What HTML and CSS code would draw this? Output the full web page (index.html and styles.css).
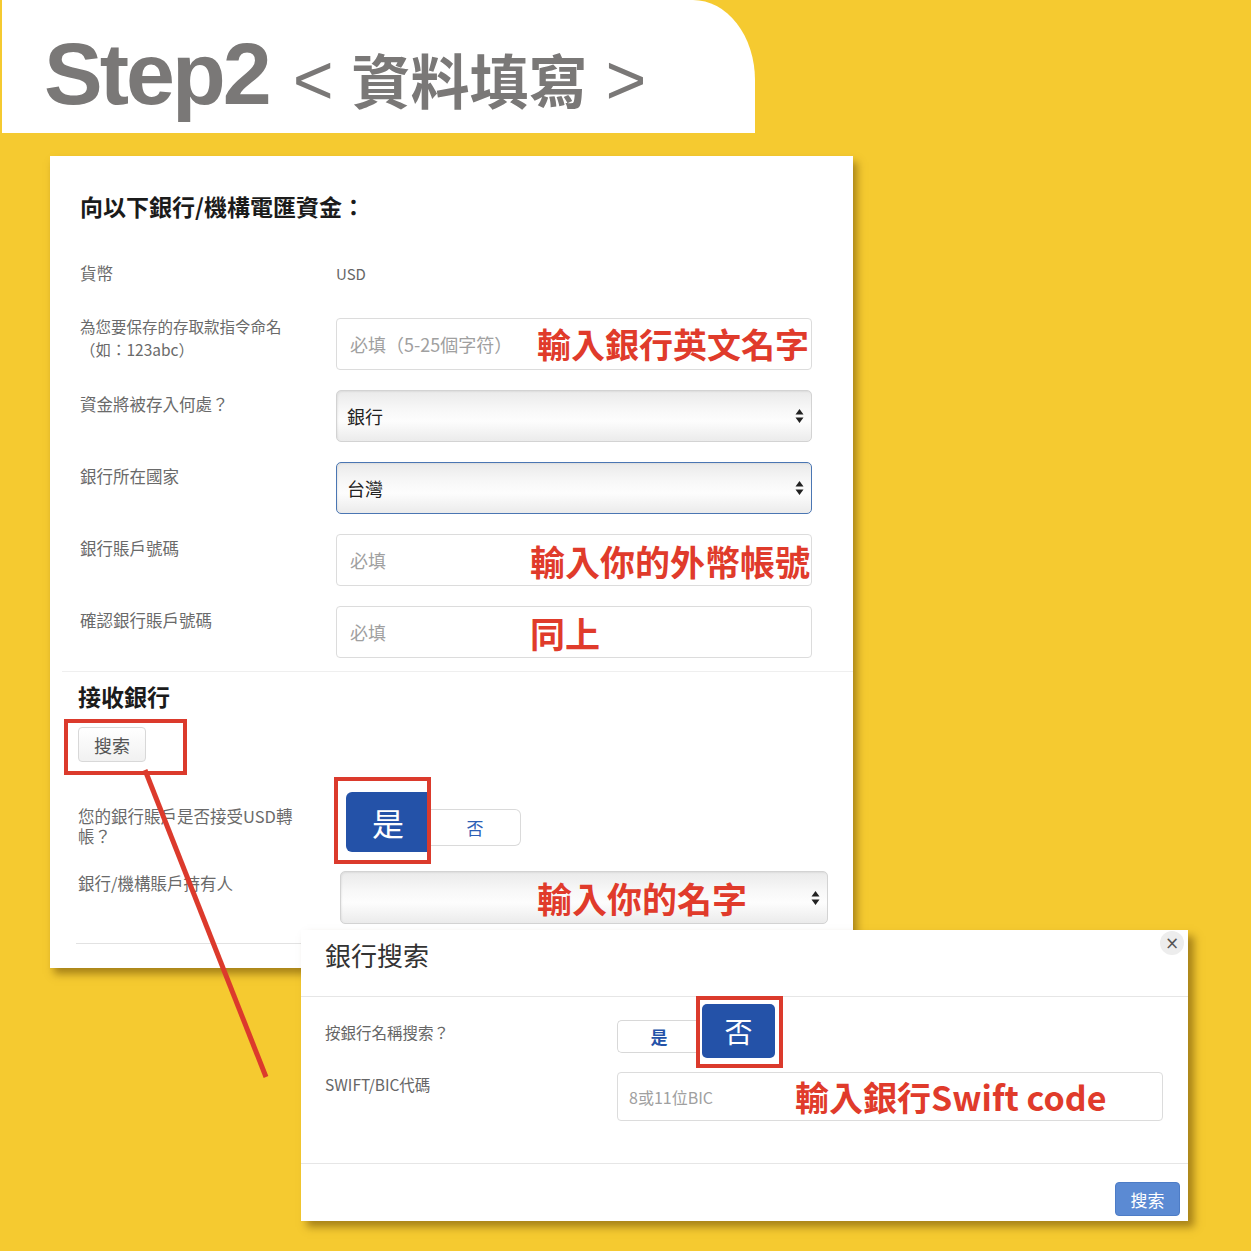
FILE: index.html
```html
<!DOCTYPE html>
<html lang="zh-Hant">
<head>
<meta charset="utf-8">
<title>Step2 資料填寫</title>
<link rel="stylesheet" href="styles.css">
</head>
<body>
<div class="page">
  <header class="banner">
    <span class="step-num">Step2</span>
    <span class="step-sub"><span class="bracket">&lt;</span><span class="step-cjk">資料填寫</span><span class="bracket">&gt;</span></span>
  </header>

  <section class="card">
    <h2 class="card-title">向以下銀行/機構電匯資金：</h2>
    <div class="rows">
      <div class="row row-currency">
        <div class="label">貨幣</div>
        <div class="value">USD</div>
      </div>
      <div class="row">
        <div class="label label-two">為您要保存的存取款指令命名<br>（如：123abc）</div>
        <div class="field input"><span class="ph">必填（5-25個字符）</span><span class="note note-a">輸入銀行英文名字</span></div>
      </div>
      <div class="row">
        <div class="label">資金將被存入何處？</div>
        <div class="field select"><span class="val">銀行</span><svg class="arrows" viewBox="0 0 9 16"><path d="M4.5 1 L8.5 6.5 H0.5Z M4.5 15 L8.5 9.5 H0.5Z" fill="#222"/></svg></div>
      </div>
      <div class="row">
        <div class="label">銀行所在國家</div>
        <div class="field select focus"><span class="val">台灣</span><svg class="arrows" viewBox="0 0 9 16"><path d="M4.5 1 L8.5 6.5 H0.5Z M4.5 15 L8.5 9.5 H0.5Z" fill="#222"/></svg></div>
      </div>
      <div class="row">
        <div class="label">銀行賬戶號碼</div>
        <div class="field input"><span class="ph">必填</span><span class="note note-b">輸入你的外幣帳號</span></div>
      </div>
      <div class="row">
        <div class="label">確認銀行賬戶號碼</div>
        <div class="field input"><span class="ph">必填</span><span class="note note-b">同上</span></div>
      </div>
    </div>
    <hr class="sep">
    <div class="section2">
      <h3 class="sub-title">接收銀行</h3>
      <button class="btn-search">搜索</button>
      <div class="row2 row-yn">
        <div class="label2">您的銀行賬戶是否接受USD轉帳？</div>
        <div class="yn"><span class="yes">是</span><span class="no">否</span></div>
      </div>
      <div class="row2 row-owner">
        <div class="label2">銀行/機構賬戶持有人</div>
        <div class="field select wide"><span class="note note-c">輸入你的名字</span><svg class="arrows" viewBox="0 0 9 16"><path d="M4.5 1 L8.5 6.5 H0.5Z M4.5 15 L8.5 9.5 H0.5Z" fill="#222"/></svg></div>
      </div>
      <hr class="sep2">
    </div>
  </section>

  <div class="dialog">
    <div class="dlg-head">銀行搜索<span class="close">×</span></div>
    <div class="dlg-body">
      <div class="drow drow-yn">
        <div class="dlabel">按銀行名稱搜索？</div>
        <div class="dyn"><span class="dyes">是</span><span class="dno">否</span></div>
      </div>
      <div class="drow drow-swift">
        <div class="dlabel">SWIFT/BIC代碼</div>
        <div class="dfield"><span class="ph dph">8或11位BIC</span><span class="note note-d">輸入銀行Swift code</span></div>
      </div>
    </div>
    <div class="dlg-foot"><button class="btn-primary">搜索</button></div>
  </div>

  <div class="mark mark-1"></div>
  <div class="mark mark-2"></div>
  <div class="mark mark-3"></div>
  <svg class="pointer" viewBox="0 0 1251 1251"><line x1="145" y1="770" x2="266" y2="1077" stroke="#dc3a2c" stroke-width="5"/></svg>
</div>
</body>
</html>
```

FILE: styles.css
```css
* { box-sizing: border-box; }

body {
  margin: 0;
  background: #f5ca30;
  font-family: "Noto Sans CJK TC", "Noto Sans", sans-serif;
}

.page {
  position: relative;
  width: 1251px;
  height: 1251px;
  overflow: hidden;
}

/* ---------- banner ---------- */
.banner {
  display: flex;
  align-items: baseline;
  gap: 24px;
  margin-left: 2px;
  width: 753px;
  height: 133px;
  background: #fff;
  border-top-right-radius: 62px 80px;
  padding: 30px 0 0 42px;
  color: #7a7877;
}

.step-num {
  font-family: "Liberation Sans", Arial, sans-serif;
  font-weight: 700;
  font-size: 88px;
  letter-spacing: -3px;
  line-height: 1;
}

.step-sub {
  display: flex;
  align-items: baseline;
  gap: 18px;
  line-height: 1;
}

.bracket {
  font-family: "Liberation Sans", Arial, sans-serif;
  font-weight: 400;
  font-size: 70px;
}

.step-cjk {
  font-size: 59px;
  font-weight: 700;
}

/* ---------- card ---------- */
.card {
  margin: 23px 0 0 50px;
  width: 803px;
  height: 812px;
  background: #fff;
  box-shadow: 4px 6px 8px rgba(90, 60, 0, 0.5);
  padding: 35px 0 0 30px;
}

.card-title {
  margin: 0 0 42px;
  font-size: 23px;
  font-weight: 700;
  line-height: 30px;
  color: #1b1b1b;
}

.rows {
  display: flex;
  flex-direction: column;
  gap: 20px;
}

.row { display: flex; }

.row-currency { margin-bottom: 14px; }

.label {
  width: 256px;
  flex: none;
  padding-top: 4px;
  font-size: 16.5px;
  line-height: 20px;
  color: #6a6a6a;
}

.row-currency .label { padding-top: 0; }

.label-two {
  margin-top: -3px;
  padding-top: 0;
  font-size: 15.5px;
  line-height: 23px;
}

.value {
  padding-top: 1px;
  font-size: 15px;
  line-height: 20px;
  color: #666;
}

.field {
  position: relative;
  width: 476px;
  height: 52px;
  border: 1px solid #dcdcdc;
  border-radius: 4px;
  background: #fff;
  display: flex;
  align-items: center;
  padding-left: 13px;
}

.ph {
  color: #a0a0a0;
  font-size: 18px;
}

.select {
  background: linear-gradient(#eaeaea, #f7f7f7 35%, #fdfdfd 60%, #ebebeb);
  border-color: #d3d3d3;
  border-radius: 5px;
  padding-left: 10px;
  box-shadow: inset 1px 1px 2px rgba(0, 0, 0, 0.06);
}

.select .val {
  font-size: 18px;
  color: #222;
}

.select.focus { border: 1.5px solid #4a76b3; }

.arrows {
  position: absolute;
  right: 7px;
  top: 50%;
  margin-top: -8px;
  width: 9px;
  height: 16px;
}

.note {
  position: absolute;
  top: 0;
  bottom: 0;
  display: flex;
  align-items: center;
  color: #e03b2b;
  font-weight: 700;
  font-size: 34px;
  line-height: 1;
  white-space: nowrap;
}

.note-a { left: 200px; }
.note-b { left: 193px; font-size: 35px; }
.note-c { left: 196px; font-size: 35px; }
.note-d { left: 177px; font-size: 34px; }

.sep {
  margin: 13px 0 0 -18px;
  width: 791px;
  border: 0;
  border-top: 1px solid #efefef;
}

/* ---------- section 2 ---------- */
.section2 { margin-left: -2px; }

.sub-title {
  margin: 9px 0 0;
  font-size: 23px;
  font-weight: 700;
  line-height: 30px;
  color: #1b1b1b;
}

.btn-search {
  display: block;
  margin-top: 16px;
  width: 68px;
  height: 35px;
  padding: 0;
  border: 1px solid #d8d8d8;
  border-radius: 4px;
  background: linear-gradient(#fff, #f1f1f1);
  font-family: inherit;
  font-size: 18px;
  color: #555;
}

.row2 { display: flex; }

.label2 {
  width: 262px;
  flex: none;
  font-size: 16.5px;
  line-height: 20px;
  color: #6a6a6a;
}

.row-yn { margin-top: 30px; }
.row-yn .label2 { padding: 14px 40px 0 0; }

.yn {
  display: flex;
  align-items: flex-end;
  margin-left: 6px;
  height: 60px;
}

.yes {
  width: 84px;
  height: 60px;
  background: #2452a8;
  color: #fff;
  font-size: 32px;
  border-radius: 6px 0 0 6px;
  display: flex;
  align-items: center;
  justify-content: center;
}

.no {
  width: 91px;
  height: 37px;
  margin-bottom: 6px;
  border: 1px solid #dadada;
  border-left: 0;
  border-radius: 0 6px 6px 0;
  color: #2d5fb5;
  font-size: 17px;
  display: flex;
  align-items: center;
  justify-content: center;
}

.row-owner { margin-top: 19px; }
.row-owner .label2 { padding-top: 2px; }

.select.wide {
  width: 488px;
  height: 53px;
}

.sep2 {
  margin: 19px 0 0 -2px;
  width: 752px;
  border: 0;
  border-top: 1px solid #e2e2e2;
}

/* ---------- dialog ---------- */
.dialog {
  position: absolute;
  left: 301px;
  top: 930px;
  width: 887px;
  height: 291px;
  background: #fff;
  box-shadow: 6px 6px 8px rgba(90, 60, 0, 0.5);
  display: flex;
  flex-direction: column;
}

.dlg-head {
  position: relative;
  flex: none;
  height: 67px;
  border-bottom: 1px solid #e6e6e6;
  padding: 8px 0 0 24px;
  font-size: 26px;
  line-height: 34px;
  color: #333;
}

.close {
  position: absolute;
  right: 4px;
  top: 1px;
  width: 24px;
  height: 24px;
  border-radius: 50%;
  background: #ededed;
  color: #555;
  font-family: "DejaVu Sans", sans-serif;
  font-size: 17px;
  line-height: 24px;
  text-align: center;
}

.dlg-body {
  flex: none;
  height: 167px;
  border-bottom: 1px solid #e6e6e6;
  padding: 7px 0 0 24px;
}

.drow { display: flex; }

.dlabel {
  width: 292px;
  flex: none;
  font-size: 15.5px;
  line-height: 20px;
  color: #666;
}

.drow-yn .dlabel { padding-top: 18px; }

.dyn {
  display: flex;
  align-items: flex-end;
  height: 54px;
}

.dyes {
  width: 83px;
  height: 33px;
  margin-bottom: 5px;
  border: 1px solid #d8d8d8;
  border-right: 0;
  border-radius: 5px 0 0 5px;
  color: #2452a8;
  font-weight: 700;
  font-size: 17px;
  display: flex;
  align-items: center;
  justify-content: center;
}

.dno {
  width: 73px;
  height: 54px;
  margin-left: 2px;
  background: #2452a8;
  border-radius: 5px;
  color: #fff;
  font-size: 28px;
  display: flex;
  align-items: center;
  justify-content: center;
}

.drow-swift { margin-top: 14px; }
.drow-swift .dlabel { padding-top: 2px; }

.dfield {
  position: relative;
  width: 546px;
  height: 49px;
  border: 1px solid #dcdcdc;
  border-radius: 4px;
  display: flex;
  align-items: center;
  padding-left: 11px;
}

.dph { font-size: 16px; }

.dlg-foot {
  flex: 1;
  display: flex;
  justify-content: flex-end;
  align-items: flex-start;
  padding: 18px 8px 0 0;
}

.btn-primary {
  width: 65px;
  height: 34px;
  padding: 0;
  background: #5b8ad3;
  border: 1px solid #4d7cc6;
  border-radius: 4px;
  color: #fff;
  font-family: inherit;
  font-size: 17px;
}

/* ---------- annotations ---------- */
.mark {
  position: absolute;
  border: 4px solid #db3a2c;
}

.mark-1 { left: 64px; top: 719px; width: 123px; height: 56px; }
.mark-2 { left: 334px; top: 777px; width: 97px; height: 87px; }
.mark-3 { left: 696px; top: 996px; width: 87px; height: 72px; }

.pointer {
  position: absolute;
  left: 0;
  top: 0;
  width: 1251px;
  height: 1251px;
  pointer-events: none;
}
```
